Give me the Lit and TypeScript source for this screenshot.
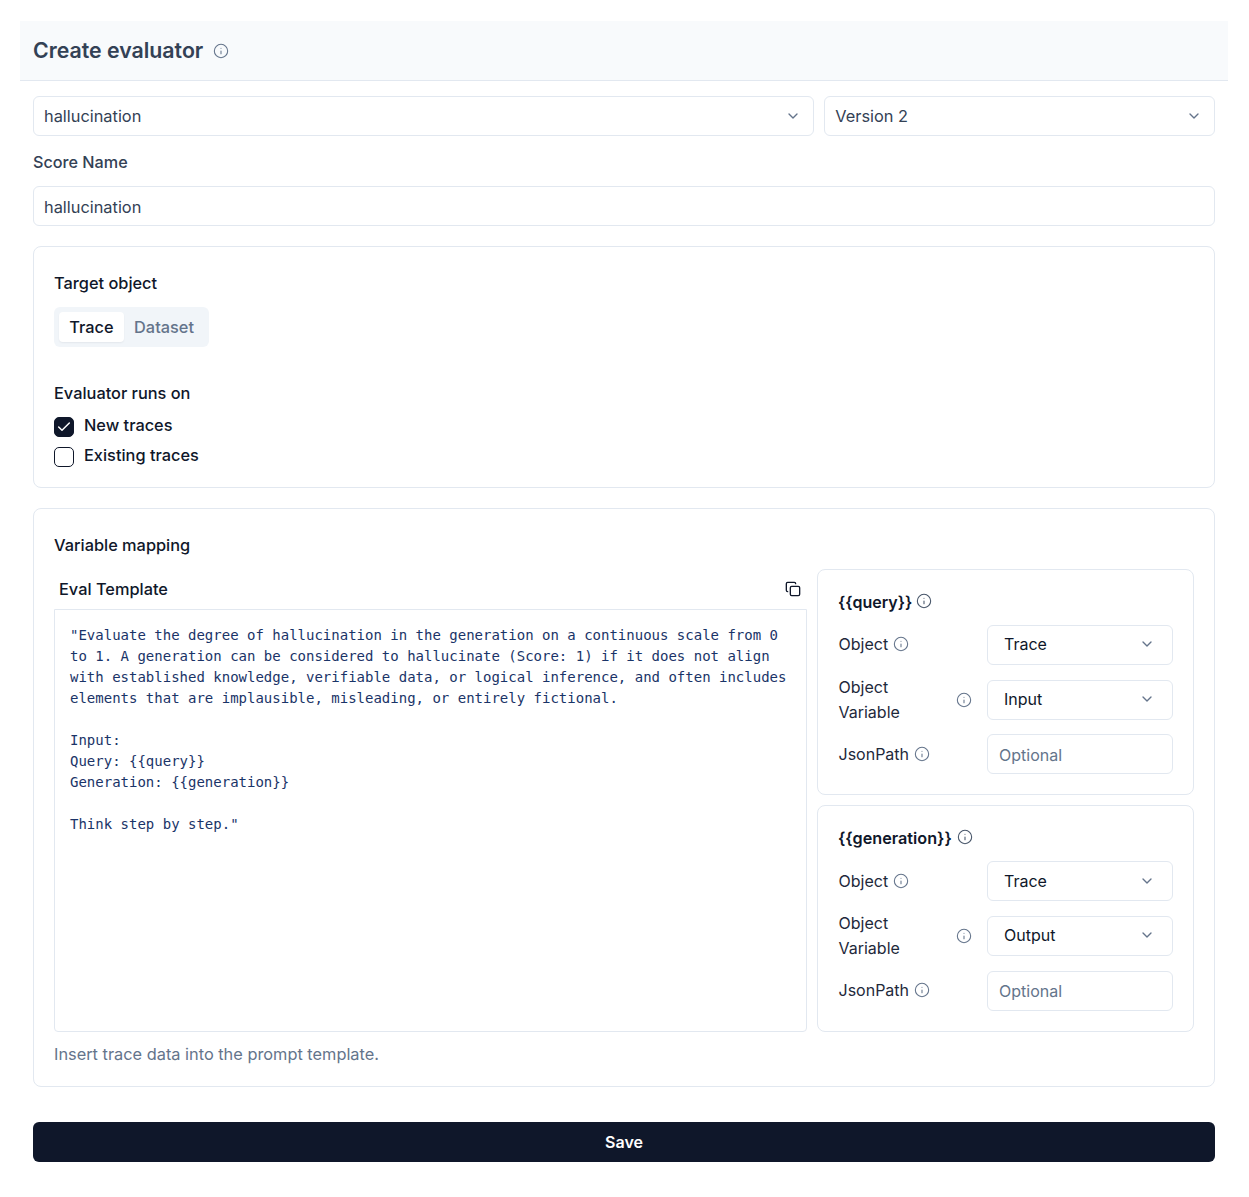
import { LitElement, html, css, svg } from "lit";
import { customElement } from "lit/decorators.js";

const info = (size = 16) => html`<svg class="info" width=${size} height=${size} viewBox="0 0 24 24" fill="none" stroke="currentColor" stroke-width="1.6" stroke-linecap="round" stroke-linejoin="round"><circle cx="12" cy="12" r="10"></circle><path d="M12 16v-4"></path><path d="M12 8h.01"></path></svg>`;
const chevron = html`<svg class="chev" width="16" height="16" viewBox="0 0 24 24" fill="none" stroke="currentColor" stroke-width="2" stroke-linecap="round" stroke-linejoin="round"><path d="m6 9 6 6 6-6"></path></svg>`;
const copy = svg`<rect x="8" y="8" width="14" height="14" rx="2" ry="2"></rect><path d="M4 16c-1.1 0-2-.9-2-2V4c0-1.100.9-2 2-2h10c1.100 0 2 .9 2 2"></path>`;

const TEMPLATE = `"Evaluate the degree of hallucination in the generation on a continuous scale from 0
to 1. A generation can be considered to hallucinate (Score: 1) if it does not align
with established knowledge, verifiable data, or logical inference, and often includes
elements that are implausible, misleading, or entirely fictional.

Input:
Query: {{query}}
Generation: {{generation}}

Think step by step."`;

@customElement("app-root")
export class AppRoot extends LitElement {
  static styles = css`
    :host { display: block; box-sizing: border-box; width: 1249px; height: 1197px; padding: 21px 21px 0 20px; font-family: Inter, "Liberation Sans", sans-serif; font-size: 16.35px; color: #0f172a; background: #fff; }
    * { box-sizing: border-box; }
    .head { height: 60px; background: #f8fafc; border-bottom: 1px solid #e2e8f0; padding-left: 13px; display: flex; align-items: center; gap: 10px; }
    .head h1 { margin: 0 0 2px; font-size: 21.3px; font-weight: 600; color: #334155; }
    .head .info { color: #64748b; }
    .body { padding: 15px 13px 0; display: flex; flex-direction: column; }
    .top { display: grid; grid-template-columns: 2fr 1fr; gap: 10px; }
    .field { height: 40px; border: 1px solid #e2e8f0; border-radius: 6px; background: #fff; display: flex; align-items: center; justify-content: space-between; padding: 0 12px 0 10px; color: #334155; }
    .field.input { padding-top: 2px; }
    .score-label { height: 50px; display: flex; align-items: center; color: #334155; font-weight: 500; padding-top: 2px; font-size: 16.2px; }
    .card { border: 1px solid #e2e8f0; border-radius: 8px; margin-top: 20px; padding: 0 20px; }
    .chev { color: #64748b; flex: none; }
    .target { height: 242px; padding-top: 26px; }
    .label { font-weight: 500; line-height: 20px; color: #0f172a; }
    .tabs { display: inline-flex; height: 40px; margin-top: 14px; padding: 5px; background: #f1f5f9; border-radius: 6px; font-weight: 500; }
    .tab { padding: 0 10.25px; height: 30px; display: flex; align-items: center; color: #64748b; border-radius: 4px; }
    .tab.active { background: #fff; color: #0f172a; box-shadow: 0 1px 2px rgba(15,23,42,.06); }
    .runs { margin-top: 36px; }
    .checks { margin-top: 14px; display: flex; flex-direction: column; gap: 10px; }
    .check { display: flex; align-items: flex-start; gap: 10px; height: 20px; font-weight: 500; color: #0f172a; line-height: 16px; }
    .box { width: 20px; height: 20px; border: 1px solid #0f172a; border-radius: 5px; background: #fff; display: flex; align-items: center; justify-content: center; flex: none; }
    .box.on { background: #0f172a; color: #fff; }
    .mapping { height: 579px; padding-top: 26px; }
    .cols { display: grid; grid-template-columns: 753px 377px; gap: 10px; margin-top: 14px; }
    .tpl-head { height: 40px; display: flex; align-items: center; justify-content: space-between; padding: 0 6px 0 5px; font-weight: 500; }
    .tpl-head svg { color: #0f172a; }
    .tpl { height: 423px; border: 1px solid #e2e8f0; border-radius: 0 0 4px 4px; margin: 0; padding: 15px; font-family: "DejaVu Sans Mono", "Liberation Mono", monospace; font-size: 14px; line-height: 21px; color: #1a3468; white-space: pre; overflow: hidden; }
    .hint { margin-top: 12px; color: #64748b; line-height: 20px; }
    .vars { display: flex; flex-direction: column; gap: 10px; }
    .var { border: 1px solid #e2e8f0; border-radius: 8px; padding: 20px 20px 0; height: 226px; }
    .var.second { height: 227px; }
    .var-title { display: flex; align-items: flex-start; gap: 4px; height: 24px; font-size: 16px; font-weight: 600; line-height: 24px; }
    .var.second .var-title { gap: 5px; font-size: 16.2px; }
    .var-title .info { margin-top: 3px; color: #475569; }
    .rows { margin-top: 11.2px; display: flex; flex-direction: column; gap: 14.5px; font-size: 16px; }
    .var.second .rows { margin-top: 11px; gap: 15px; }
    .row { display: grid; grid-template-columns: 149px 186px; grid-template-rows: 40px; height: 40px; align-items: center; color: #1e293b; }
    .var:not(.second) .row:first-child > * { padding-bottom: 2px; }
    .row .name { display: flex; align-items: center; gap: 5px; line-height: 25px; padding-left: 0.5px; }
    .row .name.two { justify-content: space-between; padding-right: 15px; }
    .row .info { color: #64748b; flex: none; }
    .row .field { padding-left: 16px; padding-right: 17px; color: #0f172a; font-weight: 400; }
    .row:nth-child(2) .field { padding-bottom: 2px; }
    .row .field.ph { padding: 2px 11px 0; color: #64748b; }
    .var.second .row .field.ph { padding-top: 0; }
    .var.second .row:last-child .name { padding-bottom: 2px; }
    .save { margin-top: 35px; height: 40px; border: 0; border-radius: 6px; background: #0f172a; color: #fff; font: 600 16px Inter, "Liberation Sans", sans-serif; display: flex; align-items: center; justify-content: center; }
  `;

  private variable(title: string, v: string, second = false) {
    return html`<div class="var ${second ? "second" : ""}">
      <div class="var-title"><span>${title}</span>${info()}</div>
      <div class="rows">
        <div class="row"><div class="name">Object ${info()}</div><div class="field"><span>Trace</span>${chevron}</div></div>
        <div class="row"><div class="name two"><span>Object<br />Variable</span>${info()}</div><div class="field"><span>${v}</span>${chevron}</div></div>
        <div class="row"><div class="name">JsonPath ${info()}</div><div class="field ph">Optional</div></div>
      </div>
    </div>`;
  }

  render() {
    return html`
      <div class="head"><h1>Create evaluator</h1>${info()}</div>
      <div class="body">
        <div class="top">
          <div class="field"><span>hallucination</span>${chevron}</div>
          <div class="field"><span>Version 2</span>${chevron}</div>
        </div>
        <div class="score-label">Score Name</div>
        <div class="field input">hallucination</div>
        <div class="card target">
          <div class="label">Target object</div>
          <div class="tabs"><div class="tab active">Trace</div><div class="tab">Dataset</div></div>
          <div class="label runs">Evaluator runs on</div>
          <div class="checks">
            <div class="check"><span class="box on"><svg width="16" height="16" viewBox="0 0 24 24" fill="none" stroke="currentColor" stroke-width="2.2" stroke-linecap="round" stroke-linejoin="round"><path d="M20 6 9 17l-5-5"></path></svg></span>New traces</div>
            <div class="check"><span class="box"></span>Existing traces</div>
          </div>
        </div>
        <div class="card mapping">
          <div class="label">Variable mapping</div>
          <div class="cols">
            <div>
              <div class="tpl-head"><span>Eval Template</span><svg width="16" height="16" viewBox="0 0 24 24" fill="none" stroke="currentColor" stroke-width="2" stroke-linecap="round" stroke-linejoin="round">${copy}</svg></div>
              <pre class="tpl">${TEMPLATE}</pre>
              <div class="hint">Insert trace data into the prompt template.</div>
            </div>
            <div class="vars">
              ${this.variable("{{query}}", "Input")}
              ${this.variable("{{generation}}", "Output", true)}
            </div>
          </div>
        </div>
        <div class="save">Save</div>
      </div>
    `;
  }
}
